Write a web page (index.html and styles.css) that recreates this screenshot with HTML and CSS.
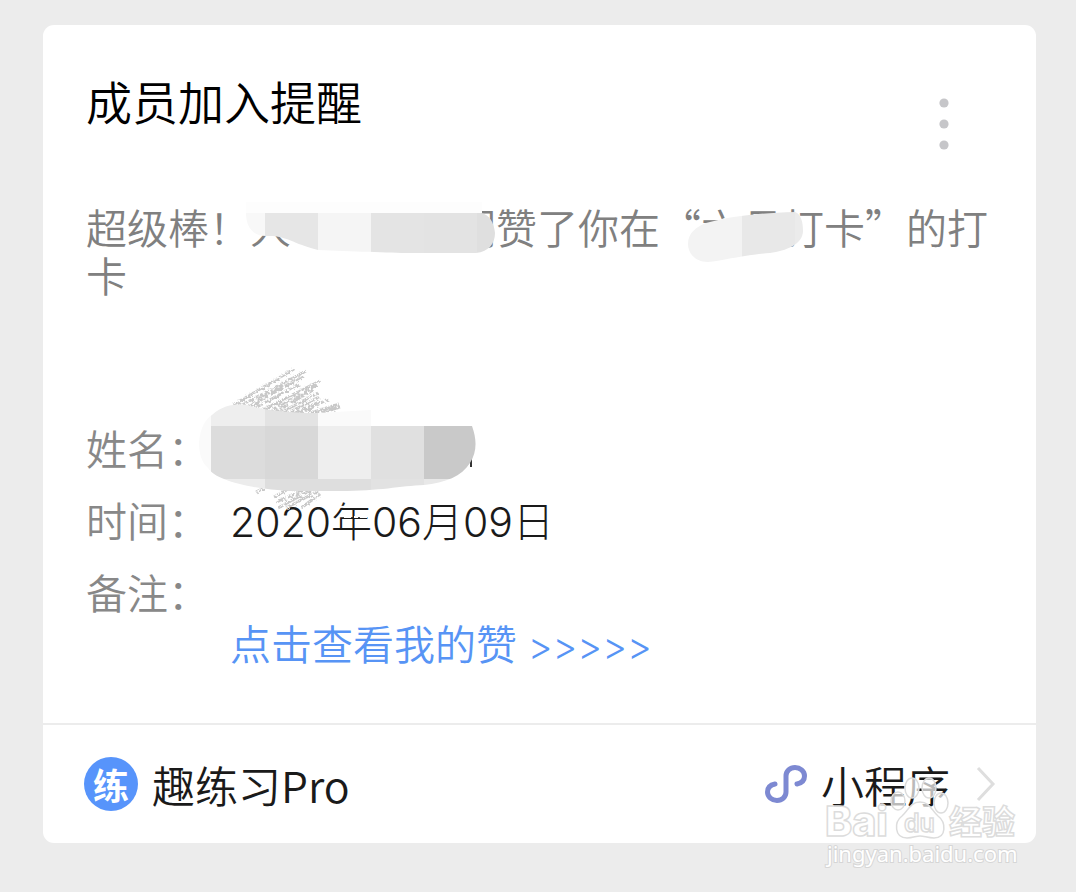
FILE: index.html
```html
<!DOCTYPE html>
<html lang="zh-CN">
<head>
<meta charset="utf-8">
<meta name="viewport" content="width=device-width, initial-scale=1">
<title>成员加入提醒</title>
<link rel="stylesheet" href="styles.css">
</head>
<body>
<main class="page">
  <article class="card">
    <div class="card-body">
      <header class="card-head">
        <h1 class="title">成员加入提醒</h1>
        <button class="more" type="button" aria-label="更多">
          <svg width="10" height="52" viewBox="0 0 10 52" fill="#c6c6c9"><circle cx="5" cy="5" r="4.6"/><circle cx="5" cy="26" r="4.6"/><circle cx="5" cy="47" r="4.6"/></svg>
        </button>
      </header>

      <div class="message">
        <p class="message-text">超级棒！人　　　　们赞了你在“六月打卡”的打卡</p>
        <svg class="mask mask-message" width="905" height="96" viewBox="86 202 905 96" aria-hidden="true">
          <defs>
            <clipPath id="blob-a"><path d="M246 213C246 227 253 236 266 236C286 235 291 243 318 250C350 251 390 253 410 253H476C489 252 495 243 495 233C494 223 490 215 481 213Z"/></clipPath>
            <clipPath id="blob-b"><path d="M688 244C688 233 696 227 706 223C728 217 755 213 795 212C801 214 803 222 803 231C803 244 786 251 770 253C742 255 722 261 708 262C696 262 688 254 688 244Z"/></clipPath>
          </defs>
          <g clip-path="url(#blob-a)">
            <path fill="#f8f8f8" d="M240 200h25v60h-25z"/><path fill="#e6e6e6" d="M265 200h53v60h-53z"/><path fill="#f5f5f5" d="M318 200h53v60h-53z"/><path fill="#e4e4e4" d="M371 200h53v60h-53z"/><path fill="#e3e3e3" d="M424 200h53v60h-53z"/><path fill="#dfdfdf" d="M477 200h20v60h-20z"/>
          </g>
          <path fill="#fdfdfd" d="M246 202h236v11H246z"/>
          <g clip-path="url(#blob-b)">
            <path fill="#f3f3f3" d="M686 205h56v62h-56z"/><path fill="#e8e8e8" d="M742 205h53v62h-53z"/><path fill="#ebebeb" d="M795 205h10v62h-10z"/>
          </g>
        </svg>
      </div>

      <div class="details">
        <dl class="fields">
          <dt>姓名：</dt><dd></dd>
          <dt>时间：</dt><dd class="value">2020年06月09日</dd>
          <dt>备注：</dt><dd></dd>
        </dl>
        <svg class="mask mask-name" width="300" height="170" viewBox="190 360 300 170" aria-hidden="true">
          <defs>
            <clipPath id="blob-c"><path d="M199 443C200 426 207 418 212 415C224 404 237 404 247 405C265 411 295 413 318 413L371 410V426H472C477 440 477 452 470 463C462 476 445 483 424 485C400 486 380 491 340 491H290C250 489 215 480 208 468C201 462 199 452 199 443Z"/></clipPath>
            <filter id="pencil" x="-10%" y="-10%" width="120%" height="120%">
              <feTurbulence type="fractalNoise" baseFrequency=".35" numOctaves="2" seed="4" result="n"/>
              <feDisplacementMap in="SourceGraphic" in2="n" scale="5" result="d"/>
              <feColorMatrix in="n" type="matrix" values="0 0 0 0 0  0 0 0 0 0  0 0 0 0 0  0 0 0 -6 4" result="m"/>
              <feComposite in="d" in2="m" operator="in"/>
            </filter>
          </defs>
          <g filter="url(#pencil)" fill="none" stroke="#c8c8c8" stroke-width="3">
            <path d="M233 405L294 369M240 406L306 371M247 408L303 376M255 408L299 384M262 410L320 381M268 412L317 385M274 413L313 390M280 413L318 393M286 414L319 397M292 414L322 401M300 414L328 399M308 414L339 404M318 414L340 407M250 406L290 379"/>
            <path d="M256 492L264 488M274 497L290 488M276 502L306 489M278 508L311 490M286 508L318 491M301 508L320 494"/>
          </g>
          <path stroke="#fff" stroke-width="2" stroke-dasharray="7 3 4 2" d="M338 507L360 506M344 517H370"/>
          <path fill="#333" d="M467 463L472 458V467H470V463Z"/>
          <g clip-path="url(#blob-c)">
            <path fill="#fafafa" d="M195 400h16v95h-16z"/>
            <path fill="#eee" d="M211 400h54v26h-54z"/><path fill="#e3e3e3" d="M265 400h53v26h-53z"/><path fill="#fafafa" d="M318 400h53v26h-53z"/>
            <path fill="#dcdcdc" d="M211 426h54v53h-54z"/><path fill="#d8d8d8" d="M265 426h53v53h-53z"/><path fill="#eee" d="M318 426h53v53h-53z"/><path fill="#e0e0e0" d="M371 426h53v53h-53z"/><path fill="#c9c9c9" d="M424 426h53v53h-53z"/>
            <path fill="#ececec" d="M211 479h54v14h-54z"/><path fill="#dedede" d="M265 479h106v14H265z"/><path fill="#e2e2e2" d="M371 479h53v14h-53z"/><path fill="#e8e8e8" d="M424 479h53v14h-53z"/>
          </g>
        </svg>
        <a class="view-link" href="#">点击查看我的赞<span class="arrows"> &gt;&gt;&gt;&gt;&gt;</span></a>
      </div>
    </div>

    <footer class="card-foot">
      <a class="account" href="#"><span class="avatar">练</span><span>趣练习Pro</span></a>
      <a class="mini" href="#">
        <svg width="42" height="38" viewBox="0 0 42 38" fill="none" stroke="#7d89d2" stroke-width="5" stroke-linecap="round"><path d="M10 19C5 20 2.500 23 2.500 27C2.500 32 7 35.500 12 35.500C17 35.500 21 32 21 27V11C21 6 25 2.500 30 2.500C35 2.500 39.500 6 39.500 11C39.500 15 37 18 32 19"/></svg>
        <span>小程序</span>
        <svg class="chevron" width="20" height="36" viewBox="0 0 20 36" fill="none" stroke="#dedede" stroke-width="3"><path d="M2 2L17 18L2 34"/></svg>
      </a>
    </footer>

    <svg class="watermark" width="200" height="96" viewBox="822 774 200 96" role="img" aria-label="Bai du 经验 jingyan.baidu.com">
      <g fill="#fff" fill-opacity=".7" stroke="#dcdcdc" stroke-width="1.500">
        <ellipse cx="898" cy="801" rx="7" ry="9"/><ellipse cx="912" cy="788" rx="7" ry="10"/><ellipse cx="929" cy="788" rx="7" ry="10"/><ellipse cx="941" cy="803" rx="7" ry="10"/>
        <path d="M920 802C910 802 908 811 902 816C894 822 894 838 907 838C913 838 916 836 920 836C924 836 928 838 934 838C947 838 946 822 938 816C932 811 930 802 920 802Z"/>
        <text class="wm-logo" x="825" y="836">Bai</text>
        <text class="wm-du" x="904" y="832">du</text>
        <text class="wm-cjk" x="949" y="834">经验</text>
      </g>
      <text class="wm-url" x="827" y="862">jingyan.baidu.com</text>
    </svg>
  </article>
</main>
</body>
</html>
```
FILE: styles.css
```css
* {
  box-sizing: border-box;
}

body {
  margin: 0;
  background: #ececec;
  color: #1a1a1a;
  font-family: "Noto Sans CJK SC", sans-serif;
  font-weight: 350;
  font-size: 41px;
  line-height: 48px;
}

h1, p, dl, dd {
  margin: 0;
}

a {
  color: inherit;
  text-decoration: none;
}

.page {
  padding: 25px 40px 49px 43px;
}

.card {
  position: relative;
  background: #fff;
  border-radius: 11px;
}

.card-body {
  padding: 48px 44px 57px 43px;
}

.card-head {
  display: flex;
  justify-content: space-between;
  align-items: flex-start;
}

.title {
  color: #000;
  font-size: 46px;
  font-weight: 350;
  line-height: 54px;
}

.more {
  display: flex;
  height: 54px;
  margin: 0 28px 0 0;
  padding: 25px 15px 0;
  border: 0;
  background: none;
  cursor: pointer;
}

.more svg {
  flex: none;
}

.message {
  position: relative;
  margin-top: 75px;
  color: #808080;
}

.mask {
  position: absolute;
  pointer-events: none;
}

.mask-message {
  top: 0;
  left: 0;
}

.mask-name {
  top: -63px;
  left: 104px;
}

.details {
  position: relative;
  margin-top: 125px;
}

.fields {
  display: grid;
  grid-template-columns: 144px 1fr;
  row-gap: 24px;
  align-items: baseline;
}

.fields dt {
  color: #888;
}

.value {
  font-family: Inter, "Noto Sans CJK SC", sans-serif;
  font-weight: 300;
  line-height: 40px;
}

.view-link {
  display: block;
  margin: 3px 0 0 144px;
  color: #5794f5;
}

.arrows {
  font-family: Inter, sans-serif;
  font-size: 38px;
  font-weight: 300;
  line-height: 40px;
}

.card-foot {
  display: flex;
  justify-content: space-between;
  align-items: center;
  min-height: 120px;
  padding: 0 40px 0 41px;
  border-top: 2px solid #ececec;
  font-size: 43px;
}

.account,
.mini {
  display: flex;
  align-items: center;
  gap: 14px;
}

.avatar {
  width: 54px;
  height: 54px;
  border-radius: 50%;
  background: #5794fb;
  color: #fff;
  font-size: 36px;
  font-weight: 700;
  line-height: 54px;
  text-align: center;
}

.chevron {
  margin-left: 12px;
}

.watermark {
  position: absolute;
  right: 14px;
  bottom: -27px;
  pointer-events: none;
}

.wm-logo {
  font: 800 41px Inter, sans-serif;
}

.wm-du {
  font: 600 25px Inter, sans-serif;
}

.wm-cjk {
  font: 700 33px "Noto Sans CJK SC", sans-serif;
}

.wm-url {
  font: 400 22px "Noto Sans", sans-serif;
  fill: #fff;
  stroke: #d6d6d6;
  stroke-width: 2px;
  paint-order: stroke;
}
```
